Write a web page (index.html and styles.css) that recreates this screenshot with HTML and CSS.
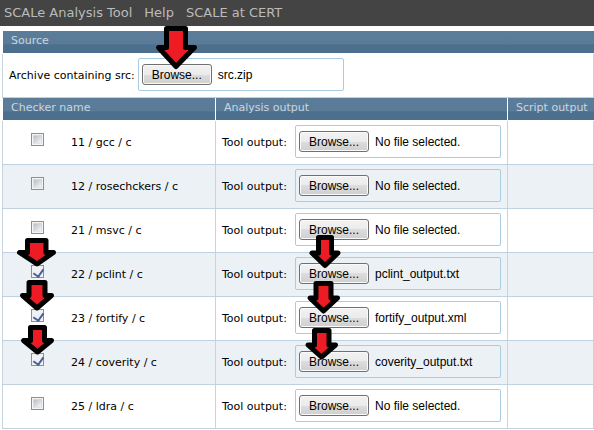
FILE: index.html
```html
<!DOCTYPE html>
<html lang="en">
<head>
<meta charset="utf-8">
<title>SCALe Analysis Tool</title>
<link rel="stylesheet" href="styles.css">
</head>
<body>
<nav class="topbar">
  <a href="#">SCALe Analysis Tool</a>
  <a href="#">Help</a>
  <a href="#">SCALE at CERT</a>
</nav>
<main class="content">
  <table class="grid">
    <colgroup><col class="col-name"><col class="col-analysis"><col></colgroup>
    <tbody>
      <tr><th colspan="3">Source</th></tr>
      <tr><td colspan="3"><div class="field"><label for="src">Archive containing src:</label><div class="file"><button type="button" id="src">Browse...</button><span>src.zip</span></div></div></td></tr>
      <tr><th>Checker name</th><th>Analysis output</th><th>Script output</th></tr>
      <tr>
        <td><div class="checker"><input type="checkbox" id="c11"><label for="c11">11 / gcc / c</label></div></td>
        <td><div class="field"><label for="f11">Tool output:</label><div class="file"><button type="button" id="f11">Browse...</button><span>No file selected.</span></div></div></td>
        <td></td>
      </tr>
      <tr class="alt">
        <td><div class="checker"><input type="checkbox" id="c12"><label for="c12">12 / rosechckers / c</label></div></td>
        <td><div class="field"><label for="f12">Tool output:</label><div class="file"><button type="button" id="f12">Browse...</button><span>No file selected.</span></div></div></td>
        <td></td>
      </tr>
      <tr>
        <td><div class="checker"><input type="checkbox" id="c21"><label for="c21">21 / msvc / c</label></div></td>
        <td><div class="field"><label for="f21">Tool output:</label><div class="file"><button type="button" id="f21">Browse...</button><span>No file selected.</span></div></div></td>
        <td></td>
      </tr>
      <tr class="alt">
        <td><div class="checker"><input type="checkbox" id="c22" checked><label for="c22">22 / pclint / c</label></div></td>
        <td><div class="field"><label for="f22">Tool output:</label><div class="file"><button type="button" id="f22">Browse...</button><span>pclint_output.txt</span></div></div></td>
        <td></td>
      </tr>
      <tr>
        <td><div class="checker"><input type="checkbox" id="c23" checked><label for="c23">23 / fortify / c</label></div></td>
        <td><div class="field"><label for="f23">Tool output:</label><div class="file"><button type="button" id="f23">Browse...</button><span>fortify_output.xml</span></div></div></td>
        <td></td>
      </tr>
      <tr class="alt">
        <td><div class="checker"><input type="checkbox" id="c24" checked><label for="c24">24 / coverity / c</label></div></td>
        <td><div class="field"><label for="f24">Tool output:</label><div class="file"><button type="button" id="f24">Browse...</button><span>coverity_output.txt</span></div></div></td>
        <td></td>
      </tr>
      <tr>
        <td><div class="checker"><input type="checkbox" id="c25"><label for="c25">25 / ldra / c</label></div></td>
        <td><div class="field"><label for="f25">Tool output:</label><div class="file"><button type="button" id="f25">Browse...</button><span>No file selected.</span></div></div></td>
        <td></td>
      </tr>
    </tbody>
  </table>
</main>
<!-- Arrows pointing at the controls to use -->
<svg class="arrows" width="360" height="370" viewBox="0 0 360 370" aria-hidden="true">
  <path d="M166.500 28.500H185.500V47.500H194.500L176 66.500L158.500 47.500H166.500Z"/>
  <path d="M27.500 240.500H46V252.500H53.500L37 264L19.500 252.500H27.500Z"/>
  <path d="M29 282.500H45V295.500H51.500L37 308L22.500 295.500H29Z"/>
  <path d="M30.500 327.500H44.500V340.500H51.500L37.500 352L23.500 340.500H30.500Z"/>
  <path d="M318.500 237.500H331.500V253H338L325 265.500L312 253H318.500Z"/>
  <path d="M316 283.500H331V298H337.500L323.500 311L310 298H316Z"/>
  <path d="M314.500 330.500H329V345H335.500L321.500 357L308 345H314.500Z"/>
</svg>
</body>
</html>
```
FILE: styles.css
```css
* {
  box-sizing: border-box;
}

body {
  margin: 0;
  background: #fff;
  color: #000;
  font: 11px/14px "DejaVu Sans", sans-serif;
}

.topbar {
  display: flex;
  gap: 12px;
  padding: 5px 4px;
  background: #444;
  font-size: 13px;
  line-height: 16px;
}

.topbar a {
  color: #bbb;
  text-decoration: none;
}

.content {
  padding: 5px 0 0 2px;
}

.grid {
  width: 100%;
  table-layout: fixed;
  border-collapse: separate;
  border-spacing: 0;
}

.col-name {
  width: 213px;
}

.col-analysis {
  width: 292px;
}

th {
  height: 23px;
  padding: 0 0 0 8px;
  border-bottom: 1px solid #fff;
  border-left: 1px solid #fff;
  background: linear-gradient(#5a7d99, #5a7b97 60%, #4b708e 62%, #4b6f8d);
  color: #c8d6e2;
  font-weight: normal;
  line-height: 20px;
  text-align: left;
  vertical-align: top;
  white-space: nowrap;
}

td {
  height: 44px;
  padding: 4px 6px 6px;
  border-bottom: 1px solid #c2d1df;
  border-left: 1px solid #c6d4e1;
  vertical-align: top;
}

td:last-child {
  border-right: 1px solid #c6d4e1;
}

.alt td {
  background: #ecf1f5;
}

.checker {
  display: flex;
  align-items: flex-start;
  gap: 27px;
  padding: 8px 0 0 22px;
}

.checker label {
  padding-top: 3px;
}

.checker input {
  width: 13px;
  height: 13px;
  margin: 0;
  appearance: none;
  border: 1px solid #8e8f8f;
  background: linear-gradient(135deg, #b9bec7, #f4f4f4) center / 7px 7px no-repeat, linear-gradient(#d2d4d6, #e4e4e4) center / 9px 9px no-repeat, #f4f4f4;
}

.checker input:checked {
  background: #f0f1f4;
}

.checker input:checked::after {
  content: "";
  display: block;
  width: 5px;
  height: 8px;
  margin: 1px 0 0 3px;
  border: solid #4a5f97;
  border-width: 0 2px 2px 0;
  transform: rotate(35deg);
}

.field {
  display: flex;
  align-items: center;
  gap: 3px;
}

.field label {
  min-width: 70px;
  padding-top: 2px;
  white-space: nowrap;
}

.file {
  display: flex;
  align-items: center;
  gap: 6px;
  width: 206px;
  height: 33px;
  padding: 0 3px;
  border: 1px solid #a9cce0;
  border-radius: 2px;
  font: 12px/16px "Liberation Sans", sans-serif;
  white-space: nowrap;
}

.file button {
  width: 70px;
  height: 21px;
  padding: 0;
  border: 1px solid #707070;
  border-radius: 3px;
  background: linear-gradient(#f2f2f2, #ebebeb 50%, #ddd 50%, #cfcfcf);
  box-shadow: inset 0 0 0 1px #fafafa;
  color: #000;
  font: inherit;
}

.arrows {
  position: absolute;
  top: 0;
  left: 0;
  fill: #ed1c24;
  stroke: #000;
  stroke-width: 5;
  stroke-linejoin: round;
  pointer-events: none;
}
```
